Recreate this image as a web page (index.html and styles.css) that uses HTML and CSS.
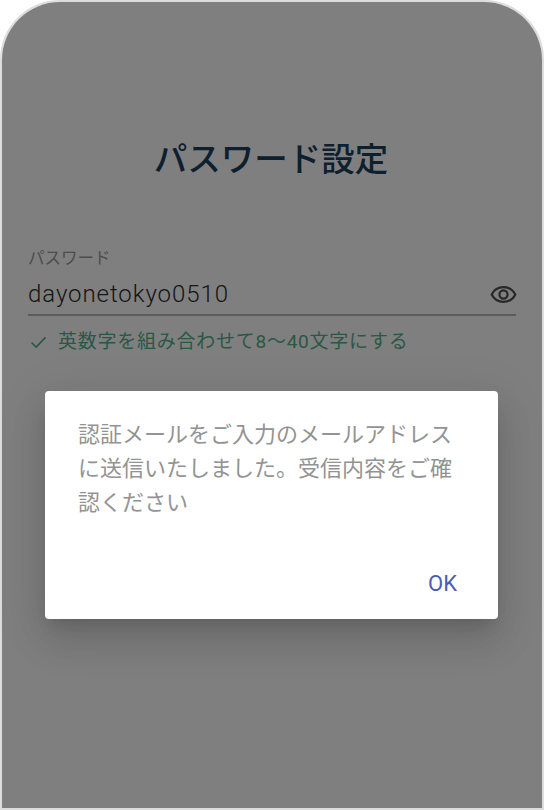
FILE: index.html
```html
<!DOCTYPE html>
<html lang="ja">
<head>
<meta charset="utf-8">
<title>パスワード設定</title>
<link rel="stylesheet" href="styles.css">
</head>
<body>
<div class="phone">
  <main class="screen">
    <h1 class="title">パスワード設定</h1>
    <div class="field">
      <div class="field-label">パスワード</div>
      <div class="field-row">
        <span class="field-value">dayonetokyo0510</span>
        <svg class="eye" viewBox="0 0 24 24" fill="none" stroke="currentColor" stroke-width="2">
          <path d="M1.5 12C3.6 7.8 7.5 5.5 12 5.5S20.400 7.800 22.500 12C20.400 16.200 16.500 18.500 12 18.500S3.600 16.200 1.500 12Z"/>
          <circle cx="12" cy="12" r="3.600"/>
        </svg>
      </div>
    </div>
    <div class="hint">
      <svg class="check" viewBox="0 0 18 14" fill="none" stroke="currentColor" stroke-width="1.800">
        <path d="M1.500 7L6.500 12L16.500 1.500"/>
      </svg>
      <span>英数字を組み合わせて8〜40文字にする</span>
    </div>
  </main>
  <div class="scrim">
    <div class="dialog" role="dialog">
      <p class="dialog-text">認証メールをご入力のメールアドレスに送信いたしました。受信内容をご確認ください</p>
      <div class="dialog-actions"><span class="ok">OK</span></div>
    </div>
  </div>
</div>
</body>
</html>
```
FILE: styles.css
```css
* { box-sizing: border-box; }
html, body { margin: 0; height: 100%; background: #fff; }
body { font-family: Roboto, "Noto Sans CJK JP", sans-serif; overflow: hidden; }
.phone {
  position: relative;
  width: 544px;
  height: 810px;
  border: 2px solid #dcdcdc;
  border-radius: 60px 60px 0 0;
  overflow: hidden;
  background: #fff;
}
.screen { padding: 134px 26px 0; }
.title {
  margin: 0 0 62px;
  padding-right: 2px;
  text-align: center;
  font-size: 33.500px;
  line-height: 48px;
  font-weight: 500;
  color: #1d3f5c;
}
.field { border-bottom: 2px solid #b8b8b8; height: 70px; }
.field-label { font-size: 16.500px; line-height: 25px; color: #9a9a9a; }
.field-row { display: flex; align-items: center; justify-content: space-between; height: 43px; padding-top: 3px; }
.field-value { font-size: 24px; font-weight: 300; letter-spacing: 0.930px; color: #2c2c2c; }
.eye { width: 27px; height: 27px; color: #505050; margin-right: -1px; }
.hint { display: flex; align-items: center; gap: 11px; margin-top: 14px; font-size: 19px; letter-spacing: 0.750px; line-height: 24px; color: #52b08c; padding-left: 2px; }
.check { width: 17px; height: 13px; flex: none; }
.scrim {
  position: absolute;
  inset: 0;
  background: rgba(0, 0, 0, 0.5);
  padding: 389px 44px 0 43px;
}
.dialog {
  background: #fff;
  height: 228px;
  width: 453px;
  border-radius: 4px;
  padding: 27px 33px 0;
  box-shadow: 0 11px 15px -7px rgba(0,0,0,.14), 0 24px 38px 3px rgba(0,0,0,.09), 0 9px 46px 8px rgba(0,0,0,.08);
}
.dialog-text { margin: 0; font-size: 22px; line-height: 34px; color: #939393; height: 153px; }
.dialog-actions { display: flex; justify-content: flex-end; margin-right: 8px; }
.ok { font-size: 22px; line-height: 26px; color: #4b5cb8; }
```
